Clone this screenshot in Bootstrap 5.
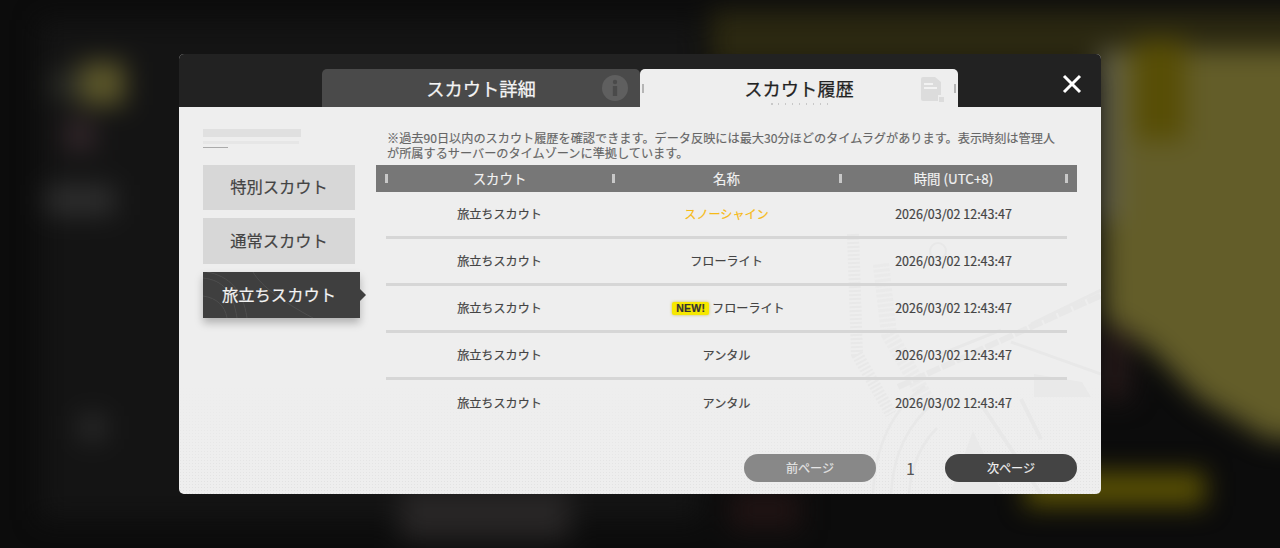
<!DOCTYPE html>
<html lang="ja">
<head>
  <meta charset="UTF-8">
  <meta name="viewport" content="width=device-width, initial-scale=1">
  <title>スカウト履歴</title>
  <link href="https://cdn.jsdelivr.net/npm/bootstrap@5.3.2/dist/css/bootstrap.min.css" rel="stylesheet">
  <style>
    html, body { height: 100%; }
    body {
      background: #0c0c0c;
      font-family: "Noto Sans CJK JP", "Noto Sans", sans-serif;
      overflow: hidden;
    }
    /* blurred game screen behind the dialog */
    .backdrop { filter: blur(13px); inset: -20px; }
    .backdrop div { position: absolute; }
    .bg-left { left: 60px; top: 40px; width: 660px; height: 500px; background: #141414; }
    .bg-top { left: 730px; top: 30px; width: 600px; height: 60px; background: #2b2811; }
    .bg-olive { left: 1120px; top: 70px; width: 220px; height: 410px; background: #635d29; clip-path: polygon(0 0, 100% 0, 100% 95%, 77% 95%, 45% 85%, 23% 73%, 2% 66%); }
    .bg-gold { left: 1155px; top: 60px; width: 50px; height: 100px; background: #574d05; }
    .bg-grey { left: 1120px; top: 70px; width: 20px; height: 170px; background: #64624c; }
    .bg-yellow { left: 1045px; top: 492px; width: 180px; height: 34px; background: #5a5104; }
    .bg-plum { left: 1120px; top: 350px; width: 30px; height: 70px; background: #241818; }
    .bg-dim { left: 750px; top: 510px; width: 70px; height: 40px; background: #1f1313; }
    .bg-mid { left: 420px; top: 510px; width: 170px; height: 50px; background: #282626; }
    .bg-l1 { left: 100px; top: 82px; width: 45px; height: 43px; background: #5c572a; }
    .bg-l2 { left: 70px; top: 90px; width: 30px; height: 30px; background: #2a2b26; }
    .bg-l3 { left: 85px; top: 140px; width: 30px; height: 30px; background: #33262a; }
    .bg-l4 { left: 65px; top: 205px; width: 70px; height: 30px; background: #2e2e2e; }
    .bg-l5 { left: 100px; top: 435px; width: 25px; height: 25px; background: #2c2c2c; }

    .dialog { width: 922px; height: 440px; border-radius: 5px; overflow: hidden; z-index: 1; background: #eee; }
    .dialog-head { height: 53px; background: #222; padding-left: 143px; padding-right: 19px; }
    .hist-tab { width: 318px; height: 38px; border-radius: 5px 5px 0 0; font-size: 18.3px; line-height: 38px; text-align: center; -webkit-text-stroke: .25px currentColor; }
    .hist-tab.off { background: #4a4a4a; color: #f4f4f4; }
    .hist-tab.on { background: #eee; color: #222; }
    .tab-icon { right: 12px; top: 6px; }
    .tab-tick { width: 2px; height: 9px; background: #b5b5b5; top: 15px; }
    .tab-dots {
      width: 58px; height: 2px; left: 131px; bottom: 2px;
      background-image: repeating-linear-gradient(90deg, #c8c8c8 0 1.5px, transparent 1.5px 7px);
    }
    .close-x { margin-top: 6px; }

    .dialog-body { height: 387px; }
    .side { width: 194px; padding-left: 24px; padding-top: 22px; }
    .mini-logo { width: 98px; height: 36px; }
    .mini-bar { height: 8px; background: #e0e0e0; margin-bottom: 4px; }
    .mini-line { height: 3px; width: 96px; background: #e6e6e6; margin-bottom: 3px; }
    .mini-foot { height: 1px; width: 25px; background: #aaa; }
    .side-btn {
      width: 152px; height: 46px; margin-bottom: 8px;
      background: #d7d7d7; color: #444;
      font-size: 16.3px; line-height: 44px; text-align: center;
      -webkit-text-stroke: .2px currentColor;
    }
    .side-btn.short { height: 45px; line-height: 43px; }
    .side-btn.on {
      width: 157px; padding-right: 5px;
      background: #3f3f3f; color: #f2f2f2;
      box-shadow: 0 5px 8px rgba(0, 0, 0, .25);
    }
    .side-btn.on::after {
      content: ""; position: absolute; left: 100%; top: 17px;
      border-left: 6px solid #3f3f3f; border-top: 6px solid transparent; border-bottom: 6px solid transparent;
    }
    .topo { left: 0; top: 0; }

    .main { padding: 24px 24px 12px 3px; min-width: 0; z-index: 1; }
    .note { padding-left: 11px; font-size: 12.16px; line-height: 15px; color: #666; height: 34px; margin: 0; white-space: nowrap; -webkit-text-stroke: .15px currentColor; }
    .col-head { height: 27px; background: #777; color: #f2f2f2; padding: 0 10px; font-size: 13.4px; line-height: 26px; -webkit-text-stroke: .15px currentColor; }
    .col-head span { width: 227px; text-align: center; position: relative; }
    .col-head span::before, .col-head span:last-child::after {
      content: ""; position: absolute; top: 9px; width: 3px; height: 9px; background: #c8c8c8;
    }
    .col-head span::before { left: -1px; }
    .col-head span:last-child::after { right: -1px; }
    .hist-row { margin: 0 10px; height: 47px; border-bottom: 3px solid #d6d6d6; color: #444; font-size: 12.1px; -webkit-text-stroke: .2px currentColor; }
    .hist-row:last-child { border-bottom: 0; }
    .hist-row > div { width: 227px; text-align: center; }
    .hist-row .stamp { font-size: 12.5px; }
    .name-gold { color: #f6ba16; }
    .new-tag {
      display: inline-block; background: #f6e800; color: #333; border-radius: 2px;
      font: 700 10.5px/13px "Liberation Sans", sans-serif; padding: 0 4px; margin: 0 3px 0 4px;
      box-shadow: 0 0 3px rgba(190, 170, 0, .7); vertical-align: 1px; letter-spacing: .2px;
    }
    .pager { margin-top: auto; }
    .page-btn { width: 132px; height: 28px; padding: 0; border: 0; border-radius: 14px; font-size: 12.1px; color: #f0f0f0; -webkit-text-stroke: .15px currentColor; }
    .page-btn.prev { background: #888; color: #e6e6e6; }
    .page-btn.next { background: #444; }
    .page-num { width: 69px; text-align: center; font-size: 16px; color: #555; }

    .wm { right: 0; bottom: 0; z-index: 0; }
    .dither {
      left: 0; right: 0; bottom: 0; height: 110px; z-index: 0;
      background-image: radial-gradient(#e1e1e1 0.7px, transparent 0.8px);
      background-size: 3px 3px;
      -webkit-mask-image: linear-gradient(to bottom, transparent, #000);
      mask-image: linear-gradient(to bottom, transparent, #000);
    }
  </style>
</head>
<body class="d-flex align-items-center justify-content-center position-relative">

<!-- 背景 -->
<div class="backdrop position-absolute">
  <div class="bg-left"></div><div class="bg-top"></div><div class="bg-olive"></div><div class="bg-gold"></div>
  <div class="bg-grey"></div><div class="bg-yellow"></div><div class="bg-plum"></div><div class="bg-dim"></div>
  <div class="bg-mid"></div><div class="bg-l1"></div><div class="bg-l2"></div><div class="bg-l3"></div>
  <div class="bg-l4"></div><div class="bg-l5"></div>
</div>

<div class="dialog position-relative">
  <!-- タブ -->
  <div class="dialog-head d-flex align-items-end">
    <div class="hist-tab off position-relative">スカウト詳細
      <svg class="tab-icon position-absolute" width="26" height="26" viewBox="0 0 26 26">
        <circle cx="13" cy="13" r="13" fill="#5f5f5f"/>
        <circle cx="13" cy="7" r="2.2" fill="#4a4a4a"/>
        <rect x="10.8" y="11" width="4.4" height="10" fill="#4a4a4a"/>
      </svg>
    </div>
    <div class="hist-tab on position-relative">スカウト履歴
      <div class="tab-tick position-absolute" style="left:2px"></div>
      <div class="tab-tick position-absolute" style="right:2px"></div>
      <div class="tab-dots position-absolute"></div>
      <svg class="tab-icon position-absolute" style="right:14px;top:8px" width="23" height="25" viewBox="0 0 23 25">
        <path d="M0 2a2 2 0 0 1 2-2h12l6 5v13h-3v6H2a2 2 0 0 1-2-2z" fill="#dcdcdc"/>
        <rect x="3" y="6" width="9" height="2" fill="#f2f2f2"/>
        <rect x="3" y="10" width="13" height="2" fill="#f2f2f2"/>
        <rect x="18" y="20" width="5" height="5" fill="#dcdcdc"/>
      </svg>
    </div>
    <button type="button" class="btn p-0 border-0 ms-auto align-self-center close-x" aria-label="閉じる">
      <svg class="d-block" width="20" height="20" viewBox="0 0 20 20">
        <path d="M2 2l16 16M18 2L2 18" stroke="#fff" stroke-width="3" fill="none"/>
      </svg>
    </button>
  </div>

  <div class="dialog-body d-flex position-relative">
    <div class="dither position-absolute"></div>
    <svg class="wm position-absolute" width="270" height="270" viewBox="0 0 270 270" fill="none" stroke="#e8e8e8">
      <path d="M22 10l4 120 34 60" stroke-width="12" stroke-dasharray="2 2"/>
      <path d="M50 40l8 70 40 70" stroke-width="16" stroke-dasharray="3 2" opacity=".7"/>
      <path d="M67 163L273 70" stroke-width="6" stroke-dasharray="14 2"/>
      <path d="M110 130l60-24M180 118l90 32M200 100l70-34" stroke-width="3"/>
      <path d="M117 275l25-68 32 68z" fill="#e9e9e9" stroke="none"/>
      <path d="M203 150l48 8 9 15h-57z" fill="#e9e9e9" stroke="none"/>
      <path d="M60 270c2-36 14-68 44-92M42 270c2-46 18-84 52-108M78 270c2-26 10-48 28-66" stroke-width="2.5"/>
      <path d="M150 180l60 90M190 175l20 40" stroke-width="4"/>
      <circle cx="107" cy="27" r="8" stroke-width="2"/>
    </svg>

    <!-- 左メニュー -->
    <div class="side flex-shrink-0 position-relative">
      <div class="mini-logo">
        <div class="mini-bar"></div>
        <div class="mini-line"></div>
        <div class="mini-foot"></div>
      </div>
      <div class="side-btn short">特別スカウト</div>
      <div class="side-btn">通常スカウト</div>
      <div class="side-btn on position-relative">
        <svg class="topo position-absolute" width="157" height="46" viewBox="0 0 157 46" fill="none" stroke="#555" stroke-width=".7">
          <path d="M0 6c20 2 30 14 34 40M4 0c22 4 36 18 40 46M50 0c8 14 30 30 60 46M0 24c14 2 22 10 24 22"/>
        </svg>
        <span class="position-relative">旅立ちスカウト</span>
      </div>
    </div>

    <!-- 履歴 -->
    <div class="main flex-grow-1 d-flex flex-column position-relative">
      <p class="note">※過去90日以内のスカウト履歴を確認できます。データ反映には最大30分ほどのタイムラグがあります。表示時刻は管理人<br>が所属するサーバーのタイムゾーンに準拠しています。</p>
      <div class="col-head d-flex">
        <span>スカウト</span><span>名称</span><span>時間 (UTC+8)</span>
      </div>
      <div id="rows"></div>
      <div class="pager d-flex justify-content-end align-items-center">
        <button type="button" class="btn page-btn prev">前ページ</button>
        <div class="page-num">1</div>
        <button type="button" class="btn page-btn next">次ページ</button>
      </div>
    </div>
  </div>
</div>

<script src="https://cdn.jsdelivr.net/npm/bootstrap@5.3.2/dist/js/bootstrap.bundle.min.js"></script>
<script>
  const scoutLog = [
    { name: '<span class="name-gold">スノーシャイン</span>' },
    { name: 'フローライト' },
    { name: '<span class="new-tag">NEW!</span>フローライト' },
    { name: 'アンタル' },
    { name: 'アンタル' }
  ];

  document.getElementById('rows').innerHTML = scoutLog.map(h => `
    <div class="hist-row d-flex align-items-center">
      <div>旅立ちスカウト</div>
      <div>${h.name}</div>
      <div class="stamp">2026/03/02 12:43:47</div>
    </div>`).join('');
</script>

</body>
</html>
